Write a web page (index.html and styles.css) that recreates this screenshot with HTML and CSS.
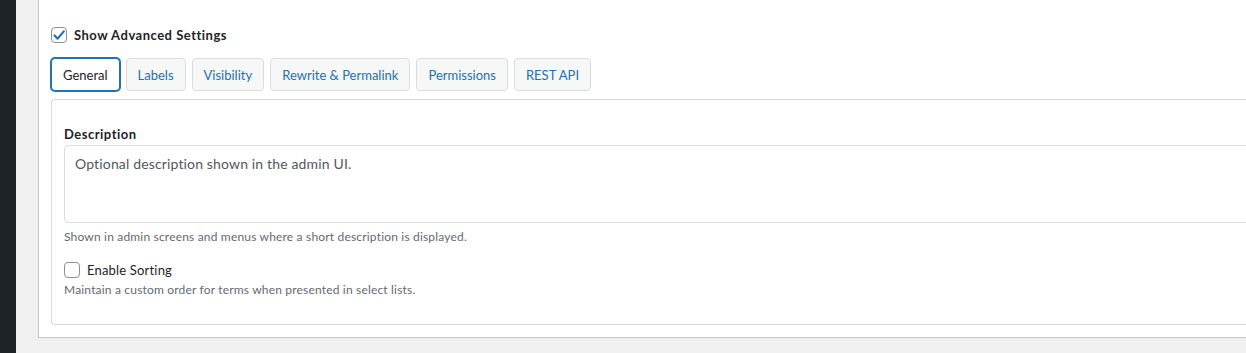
FILE: index.html
```html
<!DOCTYPE html>
<html lang="en">
<head>
  <meta charset="UTF-8" />
  <meta name="viewport" content="width=device-width, initial-scale=1.0" />
  <title>Taxonomy Settings</title>
  <link rel="stylesheet" href="styles.css">
</head>
<body>

  <div class="admin-menu"></div>

  <main class="wrap">
    <div class="postbox">

      <label class="toggle-advanced">
        <span class="check checked">
          <svg width="14" height="14" viewBox="0 0 14 14"><path d="M2.5 7.5 L5.6 10.6 L11.8 3.4" fill="none" stroke="#2271b1" stroke-width="2.2" stroke-linecap="round" stroke-linejoin="round"/></svg>
        </span>
        Show Advanced Settings
      </label>

      <nav class="tabs">
        <button class="tab active">General</button>
        <button class="tab">Labels</button>
        <button class="tab">Visibility</button>
        <button class="tab">Rewrite &amp; Permalink</button>
        <button class="tab">Permissions</button>
        <button class="tab">REST API</button>
      </nav>

      <section class="panel">
        <div class="field">
          <label class="field-label" for="description">Description</label>
          <textarea id="description" class="field-input">Optional description shown in the admin UI.</textarea>
          <p class="help">Shown in admin screens and menus where a short description is displayed.</p>
        </div>

        <div class="field">
          <label class="check-row">
            <span class="check"></span>
            Enable Sorting
          </label>
          <p class="help">Maintain a custom order for terms when presented in select lists.</p>
        </div>
      </section>

    </div>
  </main>

</body>
</html>
```

FILE: styles.css
```css
* {
  margin: 0;
  padding: 0;
  box-sizing: border-box;
  font-family: 'Lato', 'Liberation Sans', sans-serif;
}

body {
  background-color: #f0f0f1;
  color: #1d2327;
  display: flex;
  height: 353px;
  overflow: hidden;
  letter-spacing: 0.18px;
}

.admin-menu {
  width: 16px;
  flex-shrink: 0;
  background-color: #1d2327;
}

.wrap {
  flex: 1;
  padding-left: 22px;
  margin-right: -40px;
}

.postbox {
  background: #fff;
  border: 1px solid #c3c4c7;
  border-top: none;
  padding: 27px 12px 12px;
}

/* Checkboxes */
.check {
  width: 16px;
  height: 16px;
  border: 1px solid #8c8f94;
  border-radius: 4px;
  background: #fff;
  display: inline-flex;
  align-items: center;
  justify-content: center;
  flex-shrink: 0;
}

.toggle-advanced {
  display: flex;
  align-items: center;
  gap: 7px;
  font-size: 13px;
  font-weight: bold;
  letter-spacing: 0.5px;
  color: #1d2327;
  height: 16px;
}

/* Tabs */
.tabs {
  display: flex;
  gap: 6px;
  margin-top: 15px;
}

.tab {
  font-family: inherit;
  font-size: 13px;
  letter-spacing: normal;
  color: #2271b1;
  background: #f6f7f7;
  border: 1px solid #dcdcde;
  border-radius: 4px;
  height: 33px;
  padding: 0 11px;
  cursor: pointer;
}

.tab.active {
  background: #fff;
  color: #1d2327;
  border-color: #2271b1;
  box-shadow: 0 0 0 1px #2271b1;
}

/* Panel */
.panel {
  margin-top: 8px;
  border: 1px solid #dcdcde;
  border-right: none;
  border-radius: 4px 0 0 4px;
  padding: 25px 12px 26px;
}

.field + .field {
  margin-top: 16px;
}

.field-label {
  display: block;
  font-size: 13px;
  font-weight: bold;
  letter-spacing: 0.5px;
  line-height: 18px;
  margin-bottom: 2px;
}

.field-input {
  display: block;
  width: calc(100% + 20px);
  height: 78px;
  border: 1px solid #dcdcde;
  border-radius: 4px;
  padding: 9px 10px;
  font-family: inherit;
  font-size: 14px;
  letter-spacing: 0.15px;
  color: #50575e;
  resize: none;
}

.help {
  font-size: 12px;
  line-height: 16px;
  color: #646970;
  margin-top: 6px;
}

.check-row {
  display: flex;
  align-items: center;
  gap: 7px;
  font-size: 13px;
  color: #1d2327;
  height: 18px;
}

.check-row + .help {
  margin-top: 3px;
}
```
